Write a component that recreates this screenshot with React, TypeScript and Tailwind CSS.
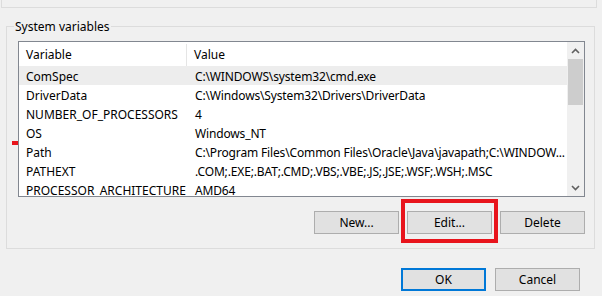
import React from "react";

const rows: [string, string][] = [
  ["ComSpec", "C:\\WINDOWS\\system32\\cmd.exe"],
  ["DriverData", "C:\\Windows\\System32\\Drivers\\DriverData"],
  ["NUMBER_OF_PROCESSORS", "4"],
  ["OS", "Windows_NT"],
  ["Path", "C:\\Program Files\\Common Files\\Oracle\\Java\\javapath;C:\\WINDOW..."],
  ["PATHEXT", ".COM;.EXE;.BAT;.CMD;.VBS;.VBE;.JS;.JSE;.WSF;.WSH;.MSC"],
  ["PROCESSOR_ARCHITECTURE", "AMD64"],
];

function Chevron({ down }: { down?: boolean }) {
  return (
    <svg width="9" height="6" viewBox="0 0 9 6" className="block">
      <polyline
        points={down ? "1,1 4.5,4.5 8,1" : "1,5 4.5,1.5 8,5"}
        fill="none"
        stroke="#606060"
        strokeWidth="1.6"
      />
    </svg>
  );
}

function Button({ label, primary }: { label: string; primary?: boolean }) {
  return (
    <button
      className={`w-[85px] h-[23px] bg-[#e1e1e1] text-[12px] text-black flex items-center justify-center pt-[1px] ${
        primary ? "border-2 border-[#0078d7]" : "border border-[#adadad]"
      }`}
    >
      {label}
    </button>
  );
}

export default function App() {
  return (
    <div
      className="relative w-[602px] h-[296px] bg-[#f0f0f0] overflow-hidden text-black"
      style={{ fontFamily: '"Noto Sans", "Open Sans", sans-serif' }}
    >
      <div className="ml-[1px] w-[596px] h-[8px] border-l border-r border-b border-[#dcdcdc]" />

      <fieldset className="mt-[9px] ml-[6px] w-[589px] h-[232px] border border-[#dcdcdc] px-0">
        <legend className="ml-[7px] px-[1px] text-[12px] leading-[16px] pt-[2px]">
          System variables
        </legend>

        <div className="mt-[6px] ml-[11px] w-[567px] h-[156px] border border-[#828790] bg-white flex">
          <div className="flex-1 overflow-hidden text-[12px]">
            <div className="flex h-[24px] items-center pt-[2px]">
              <div className="w-[168px] h-full border-r border-[#e5e5e5] pl-[7px] flex items-center">
                Variable
              </div>
              <div className="pl-[7px]">Value</div>
            </div>
            {rows.map(([name, value], i) => (
              <div
                key={name}
                className={`flex h-[19px] items-center pt-[3px] whitespace-nowrap ${
                  i === 0 ? "bg-[#ededed]" : ""
                }`}
              >
                <div className="w-[169px] pl-[7px] overflow-hidden">{name}</div>
                <div className="pl-[7px] tracking-[-0.15px]">{value}</div>
              </div>
            ))}
          </div>
          <div className="w-[17px] bg-[#f0f0f0] flex flex-col">
            <div className="h-[17px] flex items-center justify-center">
              <Chevron />
            </div>
            <div className="mx-[1px] h-[46px] bg-[#cdcdcd]" />
            <div className="flex-1" />
            <div className="h-[17px] flex items-center justify-center">
              <Chevron down />
            </div>
          </div>
        </div>

        <div className="mt-[14px] w-[578px] flex justify-end gap-[8px]">
          <Button label="New..." />
          <div className="relative">
            <Button label="Edit..." />
            <div className="absolute left-[-6px] right-[-6px] top-[-12px] bottom-[-9px] border-4 border-[#e8141c]" />
          </div>
          <Button label="Delete" />
        </div>
      </fieldset>

      <div className="mt-[19px] w-[580px] flex justify-end gap-[9px]">
        <Button label="OK" primary />
        <Button label="Cancel" />
      </div>

      <div className="absolute left-[12px] top-[141px] w-[6px] h-[4px] bg-[#e8141c]" />
    </div>
  );
}
